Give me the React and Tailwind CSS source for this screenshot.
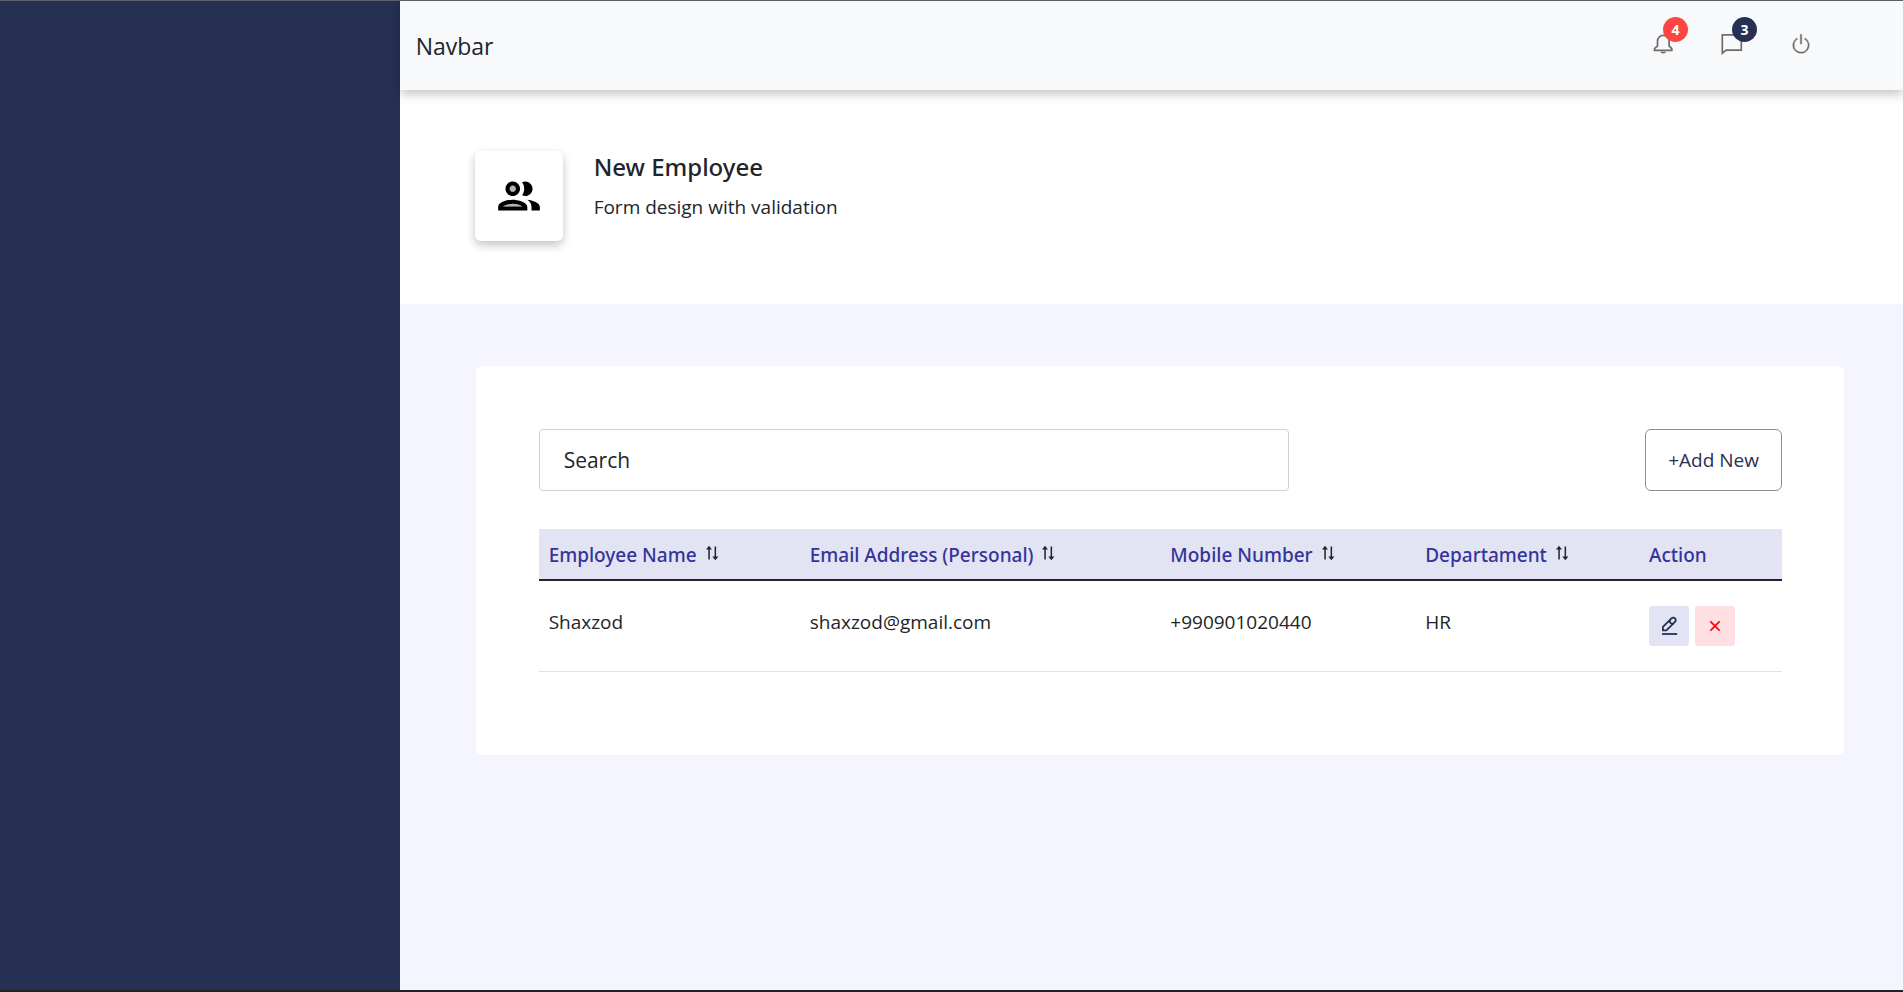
import React from 'react';
import { BsPower } from 'react-icons/bs';
import { RiCloseLine } from 'react-icons/ri';

const columns = [
  { label: 'Employee Name', width: 'w-[21%]', sortable: true },
  { label: 'Email Address (Personal)', width: 'w-[29%]', sortable: true },
  { label: 'Mobile Number', width: 'w-[20.5%]', sortable: true },
  { label: 'Departament', width: 'w-[18%]', sortable: true },
  { label: 'Action', width: 'w-[11.5%]', sortable: false },
];

const employees = [
  { id: 1, name: 'Shaxzod', email: 'shaxzod@gmail.com', phone: '+990901020440', department: 'HR' },
];

const BellIcon = () => (
  <svg width="20" height="22" viewBox="0 0 20 22" fill="none" stroke="currentColor" strokeWidth="1.7">
    <path d="M4.500 8.200a5.800 5.800 0 0 1 11.600 0v4.600l2.700 2.900v1.600H1.500v-1.600l3-2.900z" />
    <path d="M7.200 18.800h6c-.5 1-1.600 1.700-3 1.700s-2.500-.7-3-1.700z" fill="currentColor" stroke="none" />
  </svg>
);

const ChatIcon = () => (
  <svg width="22" height="22" viewBox="0 0 22 22" fill="none" stroke="currentColor" strokeWidth="1.7">
    <path d="M1.300 1.800h19v15.400H5.200L1.300 20.200z" />
  </svg>
);

const GroupIcon = () => (
  <svg width="50" height="50" viewBox="0 0 24 24" fill="currentColor">
    <path opacity=".3" d="M4.340 17h9.320c-.84-.58-2.870-1.250-4.660-1.250s-3.820.670-4.660 1.250z" />
    <circle opacity=".3" cx="9" cy="8.500" r="1.500" />
    <path d="M9 13.750c-2.340 0-7 1.170-7 3.500V19h14v-1.750c0-2.330-4.660-3.500-7-3.500zM4.340 17c.84-.58 2.870-1.250 4.660-1.250s3.820.670 4.660 1.250H4.340zM9 12c1.930 0 3.500-1.570 3.500-3.500S10.930 5 9 5 5.500 6.570 5.500 8.500 7.070 12 9 12zm0-5c.83 0 1.500.67 1.500 1.500S9.830 10 9 10s-1.500-.67-1.500-1.500S8.170 7 9 7zm7.040 6.810c1.160.84 1.960 1.960 1.960 3.440V19h4v-1.750c0-2.020-3.500-3.170-5.960-3.440zM15 12c1.930 0 3.500-1.570 3.500-3.500S16.930 5 15 5c-.54 0-1.040.13-1.500.35.63.89 1 1.980 1 3.150s-.37 2.260-1 3.150c.46.22.96.35 1.500.35z" />
  </svg>
);

const SortIcon = () => (
  <svg width="14" height="16" viewBox="0 0 14 16" fill="currentColor">
    <path d="M4 .8 7 4.600H4.800V14.500H3.300V4.600H1z" />
    <path d="M10.300 15.200 7.300 11.400h2.300V1.500h1.500v9.900h2.300z" />
  </svg>
);

const PencilIcon = () => (
  <svg width="20" height="20" viewBox="0 0 20 20" fill="none" stroke="currentColor" strokeWidth="1.800">
    <path d="M3.900 14.400v-3.500l8.600-8.500a2.400 2.400 0 0 1 3.500 3.500l-8.600 8.500z" />
    <path d="M11 3.900a2.600 2.600 0 0 0 3.500 3.500" />
    <path d="M3 18h15.200" />
  </svg>
);

const Navbar = () => (
  <header className="relative z-10 h-[89px] bg-[#f8f9fb] flex items-center justify-between pl-4 pr-[90px] shadow-[0_4px_10px_rgba(0,0,0,0.24)]">
    <span className="text-[23px] leading-8 pt-px">Navbar</span>
    <nav className="flex items-center gap-[45px] pb-[3px] text-[#6c6c6c]">
      <button type="button" aria-label="Notifications" className="relative w-6 h-6 flex items-center justify-center">
        <BellIcon />
        <span className="absolute -top-[15px] left-3 w-[25px] h-[25px] rounded-full bg-[#ff4444] text-white text-sm font-bold flex items-center justify-center">
          4
        </span>
      </button>
      <button type="button" aria-label="Messages" className="relative w-6 h-6 flex items-center justify-center">
        <ChatIcon />
        <span className="absolute -top-[15px] left-3 w-[25px] h-[25px] rounded-full bg-[#263053] text-white text-sm font-bold flex items-center justify-center">
          3
        </span>
      </button>
      <button type="button" aria-label="Log out" className="w-6 h-6 flex items-center justify-center">
        <BsPower size={22} className="stroke-current stroke-[0.3]" />
      </button>
    </nav>
  </header>
);

const PageHeader = () => (
  <section className="bg-white flex gap-[31px] pl-[75px] pr-[59px] pt-[61px] pb-[63px]">
    <div className="w-[88px] h-[90px] rounded-md bg-white text-black flex items-center justify-center shadow-[0_4px_10px_rgba(0,0,0,0.24)]">
      <GroupIcon />
    </div>
    <div>
      <h1 className="font-['Noto_Sans',sans-serif] text-2xl font-medium leading-8">New Employee</h1>
      <p className="mt-2 text-[19px] leading-8">Form design with validation</p>
    </div>
  </section>
);

const EmployeeTable = () => (
  <table className="w-full mt-[38px] table-fixed border-collapse text-left text-[19px] leading-8">
    <thead>
      <tr className="bg-[#e2e4f3] border-b-2 border-[#212529]">
        {columns.map((col) => (
          <th
            key={col.label}
            scope="col"
            className={`${col.width} h-[51px] px-[10px] pt-[2px] font-['Noto_Sans',sans-serif] font-medium text-[#34349a] whitespace-nowrap`}
          >
            <span className="flex items-center gap-2">
              {col.label}
              {col.sortable && (
                <button type="button" aria-label={`Sort by ${col.label}`} className="pb-1 text-[#212529]">
                  <SortIcon />
                </button>
              )}
            </span>
          </th>
        ))}
      </tr>
    </thead>
    <tbody>
      {employees.map((e) => (
        <tr key={e.id} className="border-b border-[#dee2e6] align-top">
          <td className="px-[10px] py-[25px]">{e.name}</td>
          <td className="px-[10px] py-[25px]">{e.email}</td>
          <td className="px-[10px] py-[25px]">{e.phone}</td>
          <td className="px-[10px] py-[25px]">{e.department}</td>
          <td className="px-[10px] py-[25px]">
            <div className="flex gap-[6px]">
              <button type="button" aria-label="Edit" className="w-10 h-10 rounded-[3px] bg-[#e2e4f3] text-[#263053] flex items-center justify-center">
                <PencilIcon />
              </button>
              <button type="button" aria-label="Delete" className="w-10 h-10 rounded-[3px] bg-[#ffdfe2] text-[#ff0000] flex items-center justify-center">
                <RiCloseLine size={20} />
              </button>
            </div>
          </td>
        </tr>
      ))}
    </tbody>
  </table>
);

const App = () => {
  return (
    <div className="min-h-screen flex border-t border-t-[#626269] border-b-2 border-b-[#202224] font-['Open_Sans',sans-serif] text-[#212529]">
      <aside className="w-[21%] shrink-0 bg-[#263053]" />
      <div className="flex-1 flex flex-col min-w-0">
        <Navbar />
        <PageHeader />
        <main className="flex-1 bg-[#f4f5ff] pl-[76px] pr-[59px] pt-[62px] pb-16">
          <div className="bg-white rounded-md pl-[63px] pr-[62px] pt-[63px] pb-[83px]">
            <div className="flex items-center justify-between">
              <input
                type="text"
                placeholder="Search"
                aria-label="Search"
                className="flex-1 max-w-[750px] h-[62px] px-6 border border-[#ced0d8] rounded text-[21px] placeholder:text-[#212529] placeholder:opacity-100"
              />
              <button type="button" className="h-[62px] px-[22px] pt-px border border-[#8e8e90] rounded-md text-[19px] text-[#263053]">
                +Add New
              </button>
            </div>
            <EmployeeTable />
          </div>
        </main>
      </div>
    </div>
  );
};

export default App;
